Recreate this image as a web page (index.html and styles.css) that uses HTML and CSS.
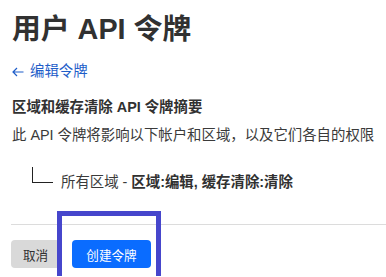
FILE: index.html
```html
<!DOCTYPE html>
<html lang="zh-CN">
<head>
<meta charset="utf-8">
<link rel="stylesheet" href="styles.css">
</head>
<body>
<div class="page">
  <h1 class="title">用户 API 令牌</h1>
  <a class="back" href="#"><svg class="arrow" width="12" height="10" viewBox="0 0 12 10"><path d="M11.5 5H1M5 1L1 5l4 4" fill="none" stroke="currentColor" stroke-width="1.2"/></svg>编辑令牌</a>
  <h2 class="subtitle">区域和缓存清除 API 令牌摘要</h2>
  <p class="desc">此 API 令牌将影响以下帐户和区域，以及它们各自的权限</p>
  <div class="tree">
    <span class="elbow"></span>
    <span class="tree-text">所有区域 - <b>区域:编辑, 缓存清除:清除</b></span>
  </div>
</div>
<div class="footer">
  <div class="actions">
    <button class="btn btn-cancel">取消</button>
    <button class="btn btn-primary">创建令牌</button>
  </div>
  <div class="focus-ring"></div>
</div>
</body>
</html>
```
FILE: styles.css
```css
html, body {
  margin: 0;
  padding: 0;
  background: #fff;
  overflow: hidden;
}
body {
  font-family: "Liberation Sans", "Noto Sans CJK SC", sans-serif;
  color: #313131;
  width: 386px;
  height: 277px;
  position: relative;
}
.page {
  padding: 11px 0 0 12px;
}
.title {
  margin: 0;
  font-size: 28.8px;
  line-height: 36px;
  font-weight: 700;
  color: #313131;
}
.back {
  display: flex;
  align-items: center;
  gap: 6px;
  margin-top: 14px;
  font-size: 14.4px;
  line-height: 20px;
  color: #1f5ec9;
  text-decoration: none;
}
.arrow {
  display: block;
  margin-top: 1px;
}
.subtitle {
  margin: 16px 0 0 0;
  font-size: 14.4px;
  line-height: 20px;
  font-weight: 700;
  color: #313131;
}
.desc {
  margin: 8px 0 0 0;
  font-size: 14.4px;
  line-height: 20px;
  color: #3a3a3a;
}
.tree {
  display: flex;
  align-items: flex-start;
  margin: 22px 0 0 20px;
  height: 25px;
}
.elbow {
  width: 20px;
  height: 15px;
  border-left: 1px solid #222;
  border-bottom: 1px solid #222;
}
.tree-text {
  margin: 5px 0 0 8px;
  font-size: 14.4px;
  line-height: 20px;
  color: #3a3a3a;
}
.tree-text b {
  color: #313131;
}
.footer {
  position: relative;
  margin-top: 32px;
  margin-left: 11px;
  border-top: 1px solid #dcdcdc;
}
.actions {
  display: flex;
  gap: 12px;
  padding-top: 15px;
}
.btn {
  font-family: "Liberation Sans", "Noto Sans CJK SC", sans-serif;
  font-size: 12.6px;
  height: 28px;
  border: none;
  border-radius: 4px;
  padding: 0;
}
.btn-cancel {
  background: #d9d9d9;
  color: #313131;
  width: 49px;
}
.btn-primary {
  background: #0a6cff;
  color: #fff;
  width: 79px;
}
.focus-ring {
  position: absolute;
  left: 46px;
  top: -14px;
  width: 94px;
  height: 60px;
  border: 5px solid #4646cc;
  border-bottom: 0;
}
```
